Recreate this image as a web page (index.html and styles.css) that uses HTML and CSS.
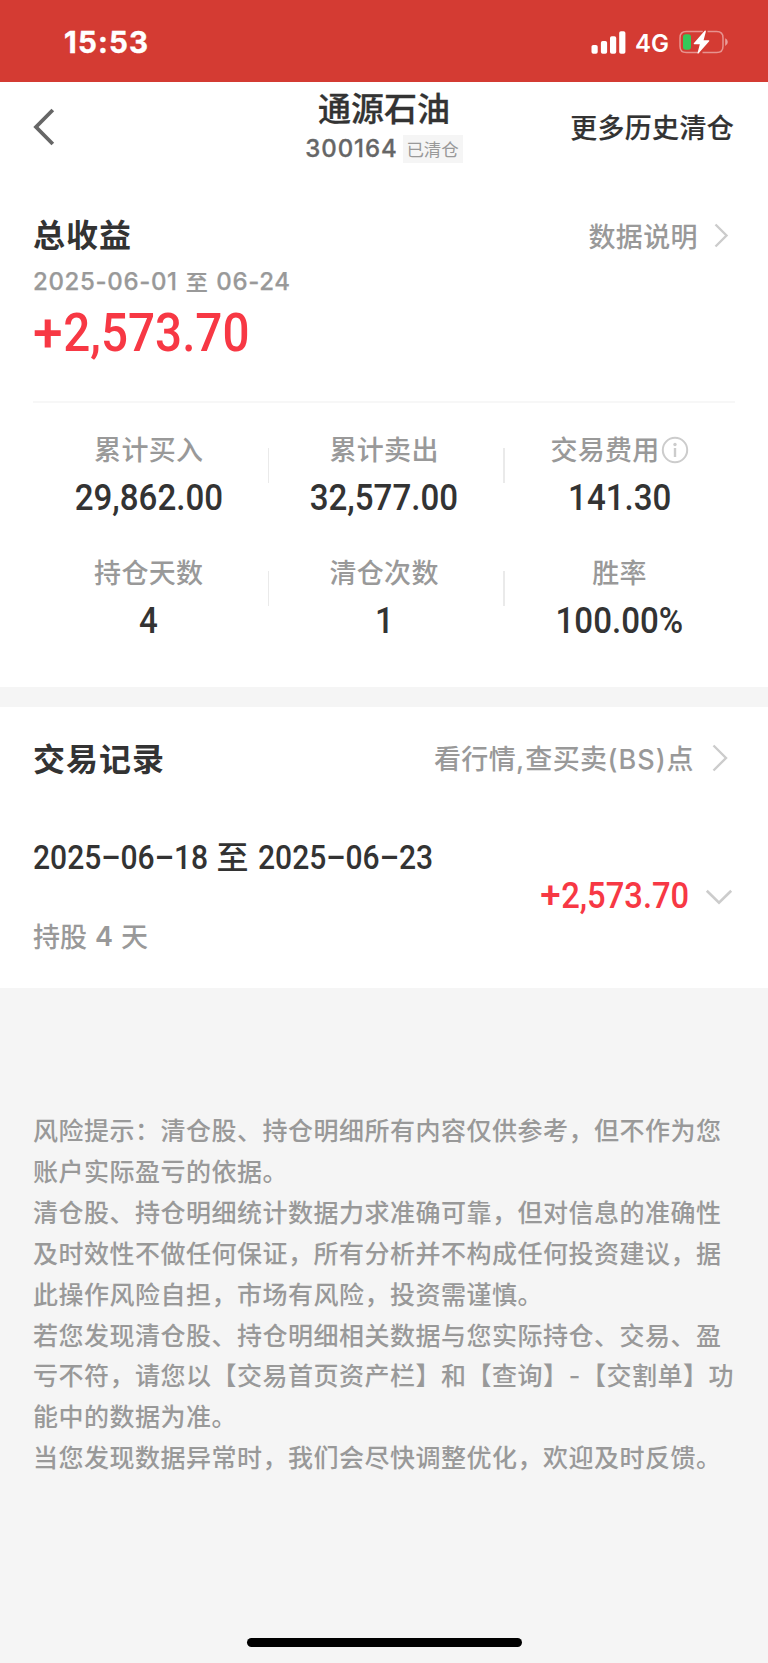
FILE: index.html
```html
<!DOCTYPE html>
<html lang="zh-CN">
<head>
<meta charset="utf-8">
<title>通源石油 300164</title>
<link rel="stylesheet" href="styles.css">
</head>
<body>
<div class="app">
  <div class="status">
    <span class="clock">15:53</span>
    <div class="status-right">
      <svg class="signal" width="36" height="24" viewBox="0 0 36 24" fill="#fff"><rect x="0.5" y="14" width="6.2" height="8.7" rx="1.8"/><rect x="9.9" y="10" width="6.2" height="12.7" rx="1.8"/><rect x="19" y="5.2" width="6.2" height="17.5" rx="1.8"/><rect x="28.2" y="0.3" width="6.2" height="22.4" rx="1.8"/></svg>
      <span class="network">4G</span>
      <svg class="battery" width="50" height="26" viewBox="0 0 50 26"><path d="M23.8 1.6H7.3Q1 1.6 1 7.9V16.2Q1 22.5 7.3 22.5H20.3M28.5 1.6H37.7Q44 1.6 44 7.9V16.2Q44 22.5 37.7 22.5H23.5" fill="none" stroke="#fff" stroke-opacity=".45" stroke-width="1.5"/><path d="M46.2 8.3Q48.8 9.4 48.8 12.1T46.2 15.9Z" fill="#fff" fill-opacity=".5"/><rect x="4" y="4.2" width="8" height="15.6" rx="2.8" fill="#34c759"/><path d="M25.7 .7 14.8 13.3Q14.3 14.2 15.4 14.2H20.8L18.5 22.9Q18.7 24.2 19.8 23.1L30.2 11.3Q30.8 10.4 29.6 10.3H24.6L26.9 1.5Q26.9.1 25.7.7Z" fill="#fff"/></svg>
    </div>
  </div>

  <header class="nav">
    <svg class="back" width="24" height="40" viewBox="0 0 24 40"><path d="M19.8 2 3 19 19.8 36" fill="none" stroke="#666" stroke-width="3.8" stroke-linecap="butt"/></svg>
    <div class="nav-title">
      <div class="stock-name">通源石油</div>
      <div class="stock-meta"><span class="stock-code">300164</span><span class="badge">已清仓</span></div>
    </div>
    <div class="nav-more">更多历史清仓</div>
  </header>

  <section class="summary">
    <div class="row-head">
      <h2>总收益</h2>
      <div class="link"><span>数据说明</span><svg width="16" height="28" viewBox="0 0 16 28"><path d="M2.5 2.5 13.5 13.5 2.5 24.5" fill="none" stroke="#ccc" stroke-width="2.4"/></svg></div>
    </div>
    <div class="period"><span>2025-06-01</span><span class="han">至</span><span>06-24</span></div>
    <div class="profit"><span class="din"><span class="plus">+</span>2,573.70</span></div>
    <div class="stats">
      <div class="stat"><div class="label">累计买入</div><div class="value"><span class="din">29,862.00</span></div></div>
      <div class="stat"><div class="label">累计卖出</div><div class="value"><span class="din">32,577.00</span></div></div>
      <div class="stat"><div class="label">交易费用<svg width="28" height="28" viewBox="0 0 28 28"><circle cx="14" cy="14" r="12.2" fill="none" stroke="#ccc" stroke-width="2"/><circle cx="14" cy="8.5" r="1.7" fill="#ccc"/><path d="M14 12V21" stroke="#ccc" stroke-width="2.4"/></svg></div><div class="value"><span class="din">141.30</span></div></div>
      <div class="stat"><div class="label">持仓天数</div><div class="value"><span class="din">4</span></div></div>
      <div class="stat"><div class="label">清仓次数</div><div class="value"><span class="din">1</span></div></div>
      <div class="stat"><div class="label">胜率</div><div class="value"><span class="din">100.00%</span></div></div>
    </div>
  </section>

  <section class="records">
    <div class="row-head">
      <h2>交易记录</h2>
      <div class="link"><span>看行情<span class="latin">,</span>查买卖<span class="latin">(BS)</span>点</span><svg class="big" width="18" height="30" viewBox="0 0 18 30"><path d="M2.5 2.5 15 15 2.5 27.5" fill="none" stroke="#ccc" stroke-width="2.4"/></svg></div>
    </div>
    <div class="record">
      <div class="record-info">
        <div class="dates"><span class="din">2025–06–18</span><span class="to">至</span><span class="din">2025–06–23</span></div>
        <div class="held">持股<span class="latin">4</span>天</div>
      </div>
      <div class="record-profit"><span class="din"><span class="plus">+</span>2,573.70</span><svg width="28" height="18" viewBox="0 0 28 18"><path d="M1.8 3.8 14 15.8 26.2 3.8" fill="none" stroke="#ccc" stroke-width="2.6"/></svg></div>
    </div>
  </section>

  <footer class="notice">
    <p>风险提示：清仓股、持仓明细所有内容仅供参考，但不作为您<br>账户实际盈亏的依据。</p>
    <p>清仓股、持仓明细统计数据力求准确可靠，但对信息的准确性<br>及时效性不做任何保证，所有分析并不构成任何投资建议，据<br>此操作风险自担，市场有风险，投资需谨慎。</p>
    <p>若您发现清仓股、持仓明细相关数据与您实际持仓、交易、盈<br>亏不符，请您以【交易首页资产栏】和【查询】<span class="dash">-</span>【交割单】功<br>能中的数据为准。</p>
    <p>当您发现数据异常时，我们会尽快调整优化，欢迎及时反馈。</p>
  </footer>
  <div class="home"></div>
</div>
</body>
</html>
```

FILE: styles.css
```css
* { box-sizing: border-box; }
body, h2, p { margin: 0; }
body {
  background: #f5f5f5;
  color: #333;
  font-family: "Noto Sans CJK SC", sans-serif;
  font-weight: 500;
}
.app {
  width: 768px;
  height: 1663px;
  display: flex;
  flex-direction: column;
  overflow: hidden;
  white-space: nowrap;
}
svg { display: block; flex: none; }
.latin { font-family: Inter, sans-serif; line-height: 1; letter-spacing: 1px; }
.din {
  display: inline-block;
  font-family: Roboto, sans-serif;
  font-weight: 500;
  transform: scaleX(.895);
}
.plus { display: inline-block; transform: scaleX(1.12); transform-origin: 0 50%; margin-right: .08em; }

.status {
  height: 82px;
  flex: none;
  background: #d43b33;
  color: #fff;
  font-family: Inter, sans-serif;
  display: flex;
  justify-content: space-between;
  padding: 0 39px 0 64px;
}
.clock { font-size: 29.5px; font-weight: 700; line-height: 85px; letter-spacing: 1.2px; -webkit-text-stroke: .4px #fff; }
.status-right { display: flex; padding-top: 30px; }
.signal { margin-top: 1px; }
.network { font-size: 24px; font-weight: 600; line-height: 27px; margin: 0 10px 0 8px; }

.nav {
  height: 106px;
  flex: none;
  background: #fff;
  display: grid;
  grid-template-columns: 201px 300px 1fr;
  padding: 0 34px 0 33px;
}
.back { margin-top: 26px; }
.nav-title { text-align: center; }
.stock-name { font-size: 33px; line-height: 40px; margin-top: 4.5px; -webkit-text-stroke: .3px #333; }
.stock-meta { display: flex; justify-content: center; align-items: center; gap: 5px; margin-top: 8.5px; }
.stock-code { font-family: Inter, sans-serif; font-size: 24px; line-height: 28px; color: #666; letter-spacing: .9px; -webkit-text-stroke: .3px #666; }
.badge {
  width: 60px;
  height: 28px;
  background: #f5f5f5;
  color: #999;
  font-size: 17.5px;
  font-weight: 400;
  line-height: 27px;
  text-align: center;
}
.nav-more { text-align: right; font-size: 27px; line-height: 40px; margin-top: 25px; letter-spacing: .3px; -webkit-text-stroke: .15px #333; }

.summary { height: 499px; flex: none; background: #fff; padding: 24px 33px 0; }
.row-head { display: flex; justify-content: space-between; align-items: center; height: 42px; }
h2 { font-size: 32px; line-height: 42px; font-weight: 700; letter-spacing: 1px; }
.link {
  display: flex;
  align-items: center;
  gap: 15px;
  color: #999;
  font-size: 27px;
  line-height: 40px;
  letter-spacing: .4px;
  padding: 6px 6px 0 0;
}
.period {
  display: flex;
  gap: 8px;
  height: 30px;
  margin-top: 13px;
  font-family: Inter, sans-serif;
  font-size: 24px;
  line-height: 30px;
  letter-spacing: .65px;
  color: #999;
  -webkit-text-stroke: .25px #999;
}
.period .han { font-family: "Noto Sans CJK SC", sans-serif; font-size: 22px; line-height: 26px; }
.profit { height: 60px; line-height: 60px; margin-top: 1px; font-size: 53.5px; color: #f73844; }
.profit .din { transform: scaleX(.89); transform-origin: 0 50%; }
.stats {
  display: grid;
  grid-template-columns: repeat(3, 235.4px);
  grid-auto-rows: 123px;
  width: 702px;
  margin-top: 43px;
  border-top: 2px solid #f7f7f7;
  padding-top: 26px;
}
.stat { text-align: center; position: relative; left: -2px; }
.stat:not(:nth-child(3n))::after {
  content: "";
  position: absolute;
  right: -3px;
  top: 19px;
  width: 1.5px;
  height: 35px;
  background: #eaeaea;
}
.label { display: flex; justify-content: center; align-items: center; height: 40px; font-size: 27px; line-height: 40px; letter-spacing: .3px; color: #999; }
.label svg { margin: 2px 0 0 1px; }
.value { font-size: 37px; line-height: 44px; margin-top: 3px; }

.records { height: 281px; flex: none; background: #fff; margin-top: 20px; padding: 29px 33px 0; }
.records .link { padding: 2px 6px 0 0; gap: 17px; }
.record { display: flex; justify-content: space-between; }
.dates { display: flex; font-size: 33px; line-height: 44px; margin-top: 58px; }
.dates .din { transform: scaleX(.91); transform-origin: 0 50%; }
.dates .to { font-size: 32px; line-height: 38px; margin: 0 10px 0 -9px; }
.held { display: flex; align-items: center; gap: 8px; font-size: 27px; line-height: 40px; margin-top: 36px; color: #999; }
.held .latin { font-weight: 600; letter-spacing: 0; }
.record-profit { display: flex; align-items: center; height: 44px; margin-top: 96px; padding-right: 2px; gap: 16px; font-size: 37px; line-height: 44px; color: #f73844; }
.record-profit .din { transform: scaleX(.885); transform-origin: 100% 50%; }

.notice { padding: 121px 33px 0; font-size: 25px; line-height: 40.9px; letter-spacing: .5px; color: #999; height: 649.5px; flex: none; }
.dash { display: inline-block; width: 12.5px; text-align: center; font-family: Inter, sans-serif; line-height: 1; }
.home { width: 275px; height: 9.5px; flex: none; border-radius: 5px; background: #000; margin: 0 auto; }
```
